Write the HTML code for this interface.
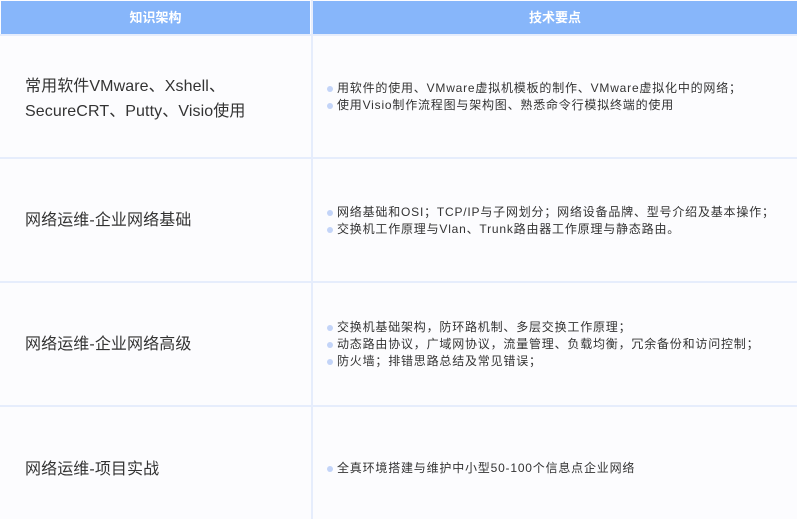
<!DOCTYPE html>
<html><head><meta charset="utf-8"><style>
*{margin:0;padding:0;box-sizing:border-box}
body{width:797px;height:519px;background:#fcfcfe;font-family:"Liberation Sans","Noto Sans CJK SC",sans-serif;overflow:hidden;position:relative}
.h{position:absolute;top:1px;height:33px;background:#87b6fa;color:#fff;font-weight:bold;font-size:13px;line-height:33px;text-align:center}
.vl{position:absolute;left:311px;top:0;width:2px;height:519px;background:#e6edfc}
.hl{position:absolute;left:0;width:797px;height:2px;background:#e6edfc}
.l{position:absolute;left:25px;font-size:16px;color:#333;line-height:25px;letter-spacing:0.1px}
.r{position:absolute;left:326px;font-size:12px;color:#333;line-height:17px;letter-spacing:0.8px;white-space:nowrap}
.r div{position:relative;padding-left:11px}
.r div:before{content:"";position:absolute;left:1px;top:6px;width:6px;height:6px;border-radius:50%;background:#c3d4f8}
</style></head><body>
<div class="h" style="left:1px;width:309px">知识架构</div>
<div class="h" style="left:313px;width:484px">技术要点</div>
<div class="vl"></div>
<div class="hl" style="top:34px"></div>
<div class="hl" style="top:157px"></div>
<div class="hl" style="top:281px"></div>
<div class="hl" style="top:405px"></div>
<div class="l" style="top:74px">常用软件VMware、Xshell、<br>SecureCRT、Putty、Visio使用</div>
<div class="r" style="top:80px"><div>用软件的使用、VMware虚拟机模板的制作、VMware虚拟化中的网络；</div><div>使用Visio制作流程图与架构图、熟悉命令行模拟终端的使用</div></div>
<div class="l" style="top:208px">网络运维-企业网络基础</div>
<div class="r" style="top:204px"><div>网络基础和OSI；TCP/IP与子网划分；网络设备品牌、型号介绍及基本操作；</div><div>交换机工作原理与Vlan、Trunk路由器工作原理与静态路由。</div></div>
<div class="l" style="top:332px">网络运维-企业网络高级</div>
<div class="r" style="top:319px"><div>交换机基础架构，防环路机制、多层交换工作原理；</div><div>动态路由协议，广域网协议，流量管理、负载均衡，冗余备份和访问控制；</div><div>防火墙；排错思路总结及常见错误；</div></div>
<div class="l" style="top:457px">网络运维-项目实战</div>
<div class="r" style="top:460px"><div>全真环境搭建与维护中小型50-100个信息点企业网络</div></div>
</body></html>
